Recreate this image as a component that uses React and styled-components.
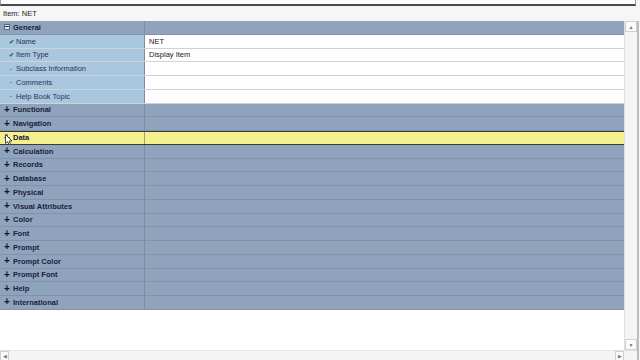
import React from "react";
import styled, { createGlobalStyle } from "styled-components";

const Global = createGlobalStyle`
  html, body {
    margin: 0;
    padding: 0;
    background: #f6f6f6;
  }
  * {
    box-sizing: border-box;
  }
`;

const Page = styled.div`
  width: 640px;
  height: 360px;
  display: flex;
  flex-direction: column;
  font-family: "Liberation Sans", Arial, sans-serif;
  font-size: 7.5px;
  color: #1c2240;
  overflow: hidden;
  position: relative;
`;

const TopField = styled.div`
  height: 6px;
  width: 636px;
  background: #fdfdfd;
  border: 1px solid #9a9a9a;
  border-top: none;
  border-bottom: 2px solid #4a4a4a;
`;

const Caption = styled.div`
  height: 15px;
  padding: 2px 3px 0;
  line-height: 11px;
  color: #1a1a1a;
`;

const Panel = styled.div`
  flex: 1;
  display: flex;
  flex-direction: column;
  background: #fff;
  border-right: 2px solid #bcbcbc;
  width: 639px;
`;

const Body = styled.div`
  flex: 1;
  display: flex;
`;

const Grid = styled.div`
  width: 626px;
  display: flex;
  flex-direction: column;
`;

const Row = styled.div`
  height: 13.76px;
  display: flex;
  background: ${(p) => (p.$selected ? "#f6ef8e" : p.$prop ? "#fff" : "#8fa4bc")};
  border-top: ${(p) => (p.$selected ? "1px solid #3a3a3a" : "none")};
  border-bottom: 1px solid
    ${(p) => (p.$selected ? "#3a3a3a" : p.$prop ? "#cfd2d6" : "#8093aa")};
`;

const NameCell = styled.div`
  width: 145px;
  display: flex;
  align-items: center;
  gap: 3px;
  padding-left: ${(p) => (p.$prop ? "9px" : "4px")};
  font-weight: ${(p) => (p.$prop ? "normal" : "bold")};
  color: ${(p) => (p.$prop ? "#2a3458" : "#18203e")};
  background: ${(p) => (p.$selected ? "#f6ef8e" : p.$prop ? "#a9c7df" : "transparent")};
  border-right: 1px solid ${(p) => (p.$selected ? "#a8a070" : "#7a8ea6")};
  white-space: nowrap;
`;

const ValueCell = styled.div`
  flex: 1;
  display: flex;
  align-items: center;
  padding-left: 4px;
  color: #222;
`;

const Expander = styled.span`
  width: 6px;
  height: 6px;
  display: inline-flex;
  align-items: center;
  justify-content: center;
  background: ${(p) => (p.$open ? "#e8ecf2" : "transparent")};
  border: ${(p) => (p.$open ? "1px solid #5c6a80" : "none")};
  color: #10162a;
  font-size: ${(p) => (p.$open ? "8px" : "10px")};
  line-height: 6px;
  font-weight: bold;
`;

const Mark = styled.span`
  width: 4px;
  display: inline-block;
  text-align: center;
  color: ${(p) => (p.$set ? "#2f6a2a" : "#555c70")};
  font-weight: bold;
  font-size: 6px;
`;

const VScroll = styled.div`
  width: 13px;
  display: flex;
  flex-direction: column;
  justify-content: space-between;
  background: #f4f4f4;
  border-left: 1px solid #e0e0e0;
`;

const HScroll = styled.div`
  height: 10px;
  display: flex;
  justify-content: space-between;
  align-items: stretch;
  background: #f4f4f4;
  border-top: 1px solid #e4e4e4;
  padding-right: 13px;
`;

const Arrow = styled.div`
  width: ${(p) => (p.$h ? "9px" : "12px")};
  height: ${(p) => (p.$h ? "10px" : "11px")};
  display: flex;
  align-items: center;
  justify-content: center;
  color: #777;
  font-size: 5px;
  border: 1px solid #d0d0d0;
  background: #fbfbfb;
`;

const Cursor = styled.svg`
  position: absolute;
  left: 5px;
  top: 134px;
`;

const props = [
  { name: "Name", value: "NET", set: true },
  { name: "Item Type", value: "Display Item", set: true },
  { name: "Subclass Information" },
  { name: "Comments" },
  { name: "Help Book Topic" },
];

const categories = [
  "Functional",
  "Navigation",
  "Data",
  "Calculation",
  "Records",
  "Database",
  "Physical",
  "Visual Attributes",
  "Color",
  "Font",
  "Prompt",
  "Prompt Color",
  "Prompt Font",
  "Help",
  "International",
];

export default function App() {
  return (
    <Page>
      <Global />
      <TopField />
      <Caption>Item: NET</Caption>
      <Panel>
        <Body>
          <Grid>
            <Row>
              <NameCell>
                <Expander $open>−</Expander>
                General
              </NameCell>
              <ValueCell />
            </Row>
            {props.map((p) => (
              <Row key={p.name} $prop>
                <NameCell $prop>
                  <Mark $set={p.set}>{p.set ? "✔" : "-"}</Mark>
                  {p.name}
                </NameCell>
                <ValueCell>{p.value}</ValueCell>
              </Row>
            ))}
            {categories.map((c) => (
              <Row key={c} $selected={c === "Data"}>
                <NameCell $selected={c === "Data"}>
                  <Expander>+</Expander>
                  {c}
                </NameCell>
                <ValueCell />
              </Row>
            ))}
          </Grid>
          <VScroll>
            <Arrow>▲</Arrow>
            <Arrow>▼</Arrow>
          </VScroll>
        </Body>
        <HScroll>
          <Arrow $h>◀</Arrow>
          <Arrow $h>▶</Arrow>
        </HScroll>
      </Panel>
      <Cursor width="8" height="12" viewBox="0 0 8 12">
        <path d="M0.5 0.5 L0.5 9.5 L2.6 7.6 L4.2 11 L5.6 10.3 L4.1 7 L7 7 Z" fill="#fff" stroke="#222" strokeWidth="0.8" />
      </Cursor>
    </Page>
  );
}
